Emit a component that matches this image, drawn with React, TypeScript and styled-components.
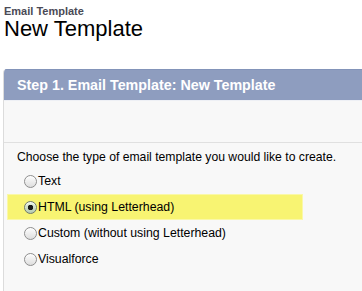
import React from "react"
import styled, { createGlobalStyle } from "styled-components"

const GlobalStyle = createGlobalStyle`
  body {
    margin: 0;
    background: #fff;
    font-family: "Liberation Sans", Arial, sans-serif;
    color: #000;
  }
`

const Page = styled.div`
  padding: 5px 0 0 3px;
  overflow: hidden;
`

const TitleBlock = styled.div`
  padding-left: 1px;
  height: 64px;
`

const Kicker = styled.div`
  font-size: 11px;
  font-weight: bold;
  line-height: 12px;
  color: #4a4a56;
`

const Title = styled.h1`
  margin: 0;
  font-size: 22px;
  font-weight: normal;
  line-height: 24px;
`

const Panel = styled.div`
  width: 380px;
  border-left: 1px solid #dcdcdc;
  border-top-left-radius: 4px;
  background: #f8f8f8;
  overflow: hidden;
`

const PanelHeader = styled.div`
  height: 31px;
  line-height: 31px;
  padding-left: 13px;
  background: #8e9dbf;
  border-top: 1px solid #8394b9;
  box-sizing: border-box;
  color: #fff;
  font-size: 14.3px;
  font-weight: bold;
  white-space: nowrap;
`

const Spacer = styled.div`
  height: 41px;
  border-top: 1px solid #eef0f5;
  border-bottom: 1px solid #e0e0e0;
`

const Body = styled.div`
  padding: 7px 0 20px 0;
`

const Prompt = styled.div`
  padding-left: 13px;
  font-size: 12.2px;
  line-height: 15px;
  margin-bottom: 4px;
`

const Options = styled.div`
  display: flex;
  flex-direction: column;
  gap: 2px;
`

const Row = styled.label<{ $highlight?: boolean }>`
  display: flex;
  align-items: center;
  gap: 1px;
  width: 294px;
  height: 24px;
  margin-left: 4px;
  padding-left: 16px;
  box-sizing: border-box;
  font-size: 12.3px;
  background: ${(p) => (p.$highlight ? "#f8f472" : "transparent")};
  box-shadow: ${(p) => (p.$highlight ? "0 0 0 1px #faf8a8" : "none")};
`

const Radio = styled.span<{ $checked?: boolean }>`
  width: 13px;
  height: 13px;
  border-radius: 50%;
  box-sizing: border-box;
  border: 1px solid ${(p) => (p.$checked ? "#6f7a6c" : "#8e8e8e")};
  background: ${(p) =>
    p.$checked
      ? "radial-gradient(circle at 50% 50%, #1a1a1a 0 2.5px, transparent 3px), linear-gradient(#e6f1df, #b6cbb0)"
      : "linear-gradient(#fdfdfd, #dedede)"};
  box-shadow: inset 0 1px 1px rgba(255, 255, 255, 0.8);
  flex-shrink: 0;
`

const options = [
  { label: "Text" },
  { label: "HTML (using Letterhead)", checked: true },
  { label: "Custom (without using Letterhead)" },
  { label: "Visualforce" },
]

const App: React.FC = () => {
  return (
    <>
      <GlobalStyle />
      <Page>
        <TitleBlock>
          <Kicker>Email Template</Kicker>
          <Title>New Template</Title>
        </TitleBlock>
        <Panel>
          <PanelHeader>Step 1. Email Template: New Template</PanelHeader>
          <Spacer />
          <Body>
            <Prompt>Choose the type of email template you would like to create.</Prompt>
            <Options>
              {options.map((o) => (
                <Row key={o.label} $highlight={o.checked}>
                  <Radio $checked={o.checked} />
                  {o.label}
                </Row>
              ))}
            </Options>
          </Body>
        </Panel>
      </Page>
    </>
  )
}

export default App
